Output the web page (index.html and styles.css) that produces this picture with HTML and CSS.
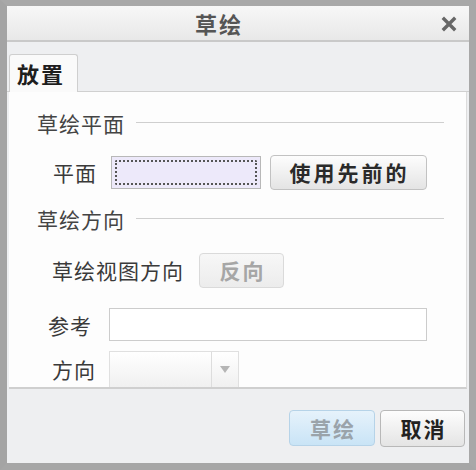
FILE: index.html
```html
<!DOCTYPE html>
<html lang="zh">
<head>
<meta charset="utf-8">
<link rel="stylesheet" href="styles.css">
</head>
<body>
<div class="dialog">
  <div class="titlebar">
    <span class="title">草绘</span>
    <span class="close">
      <svg width="16" height="16" viewBox="0 0 16 16"><path d="M3 3 L13 13 M13 3 L3 13" stroke="#666" stroke-width="3.4" stroke-linecap="square"/></svg>
    </span>
  </div>
  <div class="tabs">
    <div class="tab">放置</div>
  </div>
  <div class="panel">
    <div class="section"><span>草绘平面</span><i class="rule"></i></div>
    <div class="row row-plane">
      <span class="lbl">平面</span>
      <div class="plane-input"><div class="focus"></div></div>
      <button class="btn btn-bold">使用先前的</button>
    </div>
    <div class="section sec2"><span>草绘方向</span><i class="rule"></i></div>
    <div class="row row-view">
      <span class="lbl">草绘视图方向</span>
      <button class="btn btn-dis">反向</button>
    </div>
    <div class="row row-ref">
      <span class="lbl">参考</span>
      <div class="ref-input"></div>
    </div>
    <div class="row row-dir">
      <span class="lbl">方向</span>
      <div class="select"><div class="sel-val"></div><div class="sel-arrow"><svg width="10" height="7" viewBox="0 0 10 7"><path d="M0 0 H10 L5 7 Z" fill="#b5b5b5"/></svg></div></div>
    </div>
  </div>
  <div class="footer">
    <button class="btn btn-primary">草绘</button>
    <button class="btn btn-bold btn-cancel">取消</button>
  </div>
</div>
</body>
</html>
```

FILE: styles.css
```css
* { box-sizing: border-box; }
html, body { margin: 0; padding: 0; }
body {
  width: 476px;
  height: 470px;
  background: #9a9a9a;
  font-family: "Noto Sans CJK SC", "Noto Sans", sans-serif;
  color: #3a3a3a;
}
.dialog {
  width: 476px;
  height: 470px;
  border-top: 6px solid #a8a8a8;
  border-left: 7px solid #a4a4a4;
  border-right: 7px solid #a8a8a8;
  border-bottom: 7px solid #a6a6a6;
  background: #eeeff1;
  display: flex;
  flex-direction: column;
}
.titlebar {
  height: 36px;
  background: linear-gradient(#f7f7f7, #e8e8e8);
  border-bottom: 2px solid #c9c9c9;
  display: flex;
  align-items: center;
  justify-content: center;
  position: relative;
}
.title {
  font-size: 22px;
  font-weight: 700;
  color: #555;
  letter-spacing: 2px;
  margin-left: -38px;
  line-height: 1;
}
.close {
  position: absolute;
  right: 12px;
  top: 10px;
  width: 16px;
  height: 16px;
  display: flex;
}
.tabs {
  height: 50px;
  display: flex;
  align-items: flex-end;
  padding-left: 2px;
  border-bottom: 1px solid #d0d0d0;
}
.tab {
  width: 69px;
  height: 38px;
  background: #fafafa;
  border: 1px solid #cfcfcf;
  border-bottom: none;
  border-radius: 3px 3px 0 0;
  font-size: 22px;
  font-weight: 700;
  letter-spacing: 2px;
  color: #1e1e1e;
  padding-left: 7px;
  line-height: 36px;
  margin-bottom: -1px;
  position: relative;
}
.panel {
  background: #fdfdfd;
  margin: 0 2px 0 2px;
  border-right: 1px solid #dcdcdc;
  height: 297px;
  padding: 17px 22px 0 28px;
  border-bottom: 2px solid #cfcfcf;
}
.section {
  display: flex;
  align-items: center;
  font-size: 21px;
  letter-spacing: 1px;
  color: #444;
  height: 28px;
}
.section .rule {
  flex: 1;
  height: 1px;
  background: #cfcfcf;
  margin-left: 11px;
  margin-top: -2px;
}
.sec2 { margin-top: 15px; }
.row {
  display: flex;
  align-items: center;
  font-size: 21px;
  letter-spacing: 1px;
  color: #3a3a3a;
}
.lbl { flex: none; }
.row-plane { margin-top: 17px; padding-left: 16px; height: 36px; }
.row-plane .lbl { width: 58px; }
.plane-input {
  width: 150px;
  height: 33px;
  border: 1px solid #b8b8b8;
  background: #ede9fa;
  padding: 3px;
}
.focus {
  width: 100%;
  height: 100%;
  border: 2px dotted #555;
  border-radius: 2px;
}
.btn {
  font-family: "Noto Sans CJK SC", "Noto Sans", sans-serif;
  font-size: 21px;
  font-weight: 700;
  letter-spacing: 2px;
  border: 1px solid #c2c2c2;
  border-radius: 4px;
  background: linear-gradient(#fdfdfd, #e4e4e4);
  color: #2a2a2a;
  padding: 0 0 0 2px;
  height: 35px;
  line-height: 1;
}
.row-plane .btn { margin-left: 9px; width: 157px; letter-spacing: 3px; }
.row-view { margin-top: 19px; padding-left: 15px; height: 36px; }
.row-view .lbl { width: 147px; }
.btn-dis {
  width: 85px;
  color: #a6a6a6;
  background: linear-gradient(#f7f7f7, #ececec);
  border-color: #dadada;
}
.row-ref { margin-top: 20px; padding-left: 11px; height: 33px; }
.row-ref .lbl { width: 61px; }
.ref-input {
  width: 318px;
  height: 33px;
  border: 1px solid #cccccc;
  background: #fff;
}
.row-dir { margin-top: 10px; padding-left: 15px; height: 36px; }
.row-dir .lbl { width: 57px; }
.select {
  width: 130px;
  height: 36px;
  display: flex;
  border: 1px solid #e0e0e0;
  border-bottom: none;
  background: linear-gradient(#ffffff, #f0f0f0);
}
.sel-val { flex: 1; border-right: 1px solid #dddddd; }
.sel-arrow { width: 26px; display: flex; align-items: center; justify-content: center; }
.footer {
  flex: 1;
  display: flex;
  justify-content: flex-end;
  align-items: center;
  padding-right: 4px;
  gap: 5px;
  padding-top: 4px;
}
.btn-primary {
  width: 86px;
  height: 36px;
  background: linear-gradient(#e6f2fb, #c9e4f6);
  border-color: #b6d3e8;
  color: #9aa3aa;
}
.btn-cancel {
  width: 85px;
  height: 37px;
  color: #222;
  border-color: #b8b8b8;
}
```
